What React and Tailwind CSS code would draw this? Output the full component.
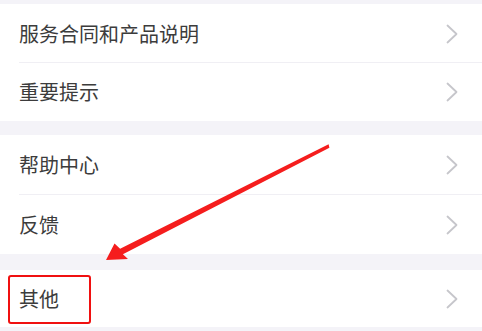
const groups = [
  { gap: "", rows: [["服务合同和产品说明", "h-[59px]"], ["重要提示", "h-[58px]"]] },
  { gap: "mt-[14px]", rows: [["帮助中心", "h-[60px]"], ["反馈", "h-[59px]"]] },
  { gap: "mt-[16px]", rows: [["其他", "h-[57px]"]] },
];

function Chevron() {
  return (
    <svg width="12" height="20" viewBox="0 0 12 20" fill="none">
      <polyline points="1.5,1.5 10.5,10 1.5,18.5" stroke="#c6c6cb" strokeWidth="1.8" strokeLinecap="round" strokeLinejoin="round" />
    </svg>
  );
}

function Row({ label, height, divider }) {
  return (
    <div className={`relative flex items-center justify-between bg-white pl-[19px] pr-[24px] ${height}`}>
      <span className="text-[20px] leading-none text-[#3c3c3c]">{label}</span>
      <Chevron />
      {divider && <div className="absolute left-[19px] right-0 bottom-0 h-px bg-[#f0eff4]" />}
    </div>
  );
}

export default function App() {
  return (
    <div
      className="relative w-[482px] h-[331px] overflow-hidden bg-[#f4f3f8]"
      style={{ fontFamily: '"Noto Sans CJK SC", "Noto Sans", sans-serif' }}
    >
      <div className="flex flex-col pt-[4px]">
        {groups.map((g, gi) => (
          <div key={gi} className={g.gap}>
            {g.rows.map(([label, height], i) => (
              <Row key={label} label={label} height={height} divider={i < g.rows.length - 1} />
            ))}
          </div>
        ))}
      </div>

      {/* red highlight box */}
      <div className="absolute left-[8px] top-[275px] w-[83px] h-[49px] border-2 border-[#f01010] rounded-[3px]" />

      {/* red arrow */}
      <svg className="absolute inset-0" width="482" height="331" viewBox="0 0 482 331">
        <polygon
          fill="#f51d1d"
          points="328.6,144.3 120.1,248.8 114.5,243.5 106,260 128,259 122.9,254.2 329.4,147.7"
        />
      </svg>
    </div>
  );
}
